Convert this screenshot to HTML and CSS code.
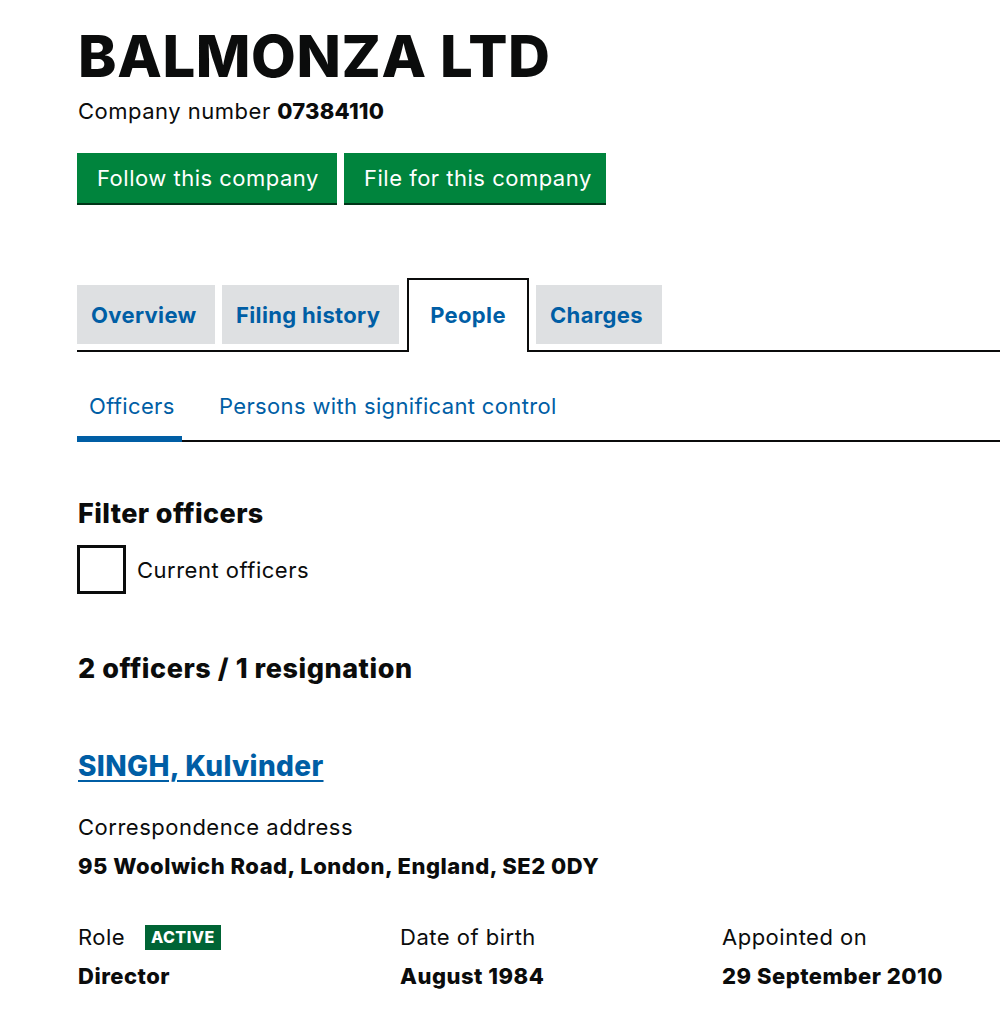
FILE: index.html
```html
<!DOCTYPE html>
<html lang="en">
<head>
<meta charset="utf-8">
<title>BALMONZA LTD - People</title>
<link rel="stylesheet" href="styles.css">
</head>
<body>
<main class="page">
  <h1 class="company-name">BALMONZA LTD</h1>
  <p class="company-number">Company number <strong>07384110</strong></p>
  <div class="actions">
    <a class="button" href="#">Follow this company</a>
    <a class="button" href="#">File for this company</a>
  </div>

  <ul class="tabs">
    <li class="tab"><a href="#">Overview</a></li>
    <li class="tab"><a href="#">Filing history</a></li>
    <li class="tab active"><a href="#">People</a></li>
    <li class="tab"><a href="#">Charges</a></li>
  </ul>

  <ul class="subtabs">
    <li class="subtab current"><a href="#">Officers</a></li>
    <li class="subtab"><a href="#">Persons with significant control</a></li>
  </ul>

  <h2 class="filter-heading">Filter officers</h2>
  <label class="check">
    <span class="box"></span>
    <span class="check-label">Current officers</span>
  </label>

  <h2 class="count-heading">2 officers / 1 resignation</h2>

  <section class="officer">
    <h2 class="officer-name"><a href="#">SINGH, Kulvinder</a></h2>
    <p class="label">Correspondence address</p>
    <p class="value">95 Woolwich Road, London, England, SE2 0DY</p>
    <div class="details">
      <div class="detail">
        <p class="label">Role <span class="status">ACTIVE</span></p>
        <p class="value">Director</p>
      </div>
      <div class="detail">
        <p class="label">Date of birth</p>
        <p class="value">August 1984</p>
      </div>
      <div class="detail">
        <p class="label">Appointed on</p>
        <p class="value">29 September 2010</p>
      </div>
    </div>
  </section>
</main>
</body>
</html>
```

FILE: styles.css
```css
html, body {
  margin: 0;
  padding: 0;
  background: #fff;
  overflow: hidden;
}
body {
  font-family: Inter, Lato, "Liberation Sans", Arial, sans-serif;
  color: #0b0c0c;
  width: 1000px;
  height: 1010px;
}
p, h1, h2, ul { margin: 0; padding: 0; }
ul { list-style: none; }
a { text-decoration: none; }

.page {
  margin-left: 77px;
  padding-top: 23px;
  width: 923px;
}

.company-name {
  font-size: 58px;
  font-weight: 800;
  line-height: 66px;
  letter-spacing: 0.6px;
  padding-left: 1px;
}
.company-number {
  font-size: 22px;
  line-height: 30px;
  margin-top: 7px;
  padding-left: 1px;
  letter-spacing: 0.5px;
}
.company-number strong { font-weight: 800; letter-spacing: 0.2px; }

.actions {
  display: flex;
  gap: 7px;
  margin-top: 27px;
}
.button {
  display: block;
  background: #00843d;
  color: #fff;
  font-size: 22px;
  line-height: 50px;
  height: 50px;
  padding: 0 0 0 20px;
  box-shadow: 0 2px 0 #003618;
  letter-spacing: 0.5px;
  box-sizing: border-box;
  white-space: nowrap;
}
.button:first-child { width: 260px; }
.button:last-child { width: 262px; }

.tabs {
  display: flex;
  align-items: flex-end;
  gap: 7px;
  margin-top: 75px;
  border-bottom: 2px solid #0b0c0c;
  height: 72px;
}
.tab {
  background: #dee0e2;
  height: 59px;
  margin-bottom: 6px;
  display: flex;
  align-items: center;
}
.tab a {
  color: #005ea5;
  font-weight: 700;
  font-size: 22px;
  padding: 0 14px;
  letter-spacing: 0.35px;
  white-space: nowrap;
}
.tab:nth-child(1) { width: 138px; }
.tab:nth-child(2) { width: 177px; }
.tab:nth-child(3) { margin-left: 1px; }
.tab:nth-child(4) { width: 126px; }
.tab.active {
  background: #fff;
  border: 2px solid #0b0c0c;
  border-bottom: 0;
  height: 74px;
  width: 122px;
  margin-bottom: -2px;
  padding-bottom: 2px;
  box-sizing: border-box;
  justify-content: center;
}
.tab.active a { padding: 0; }

.subtabs {
  display: flex;
  border-bottom: 2px solid #0b0c0c;
  margin-top: 28px;
  height: 60px;
}
.subtab {
  height: 60px;
  box-sizing: border-box;
  padding-top: 11px;
}
.subtab a {
  color: #005ea5;
  font-size: 22px;
  line-height: 30px;
  letter-spacing: 0.35px;
  white-space: nowrap;
}
.subtab.current {
  width: 105px;
  padding-left: 12px;
  border-bottom: 6px solid #005ea5;
  margin-bottom: -2px;
  height: 62px;
}
.subtab:nth-child(2) { padding-left: 37px; }

.filter-heading {
  font-size: 27px;
  font-weight: 800;
  line-height: 34px;
  margin-top: 55px;
  padding-left: 1px;
  letter-spacing: 0.4px;
}
.check {
  display: flex;
  align-items: center;
  gap: 11px;
  margin-top: 14px;
}
.box {
  width: 49px;
  height: 49px;
  box-sizing: border-box;
  border: 3px solid #0b0c0c;
  background: #fff;
}
.check-label {
  font-size: 22px;
  line-height: 30px;
  letter-spacing: 0.5px;
}

.count-heading {
  font-size: 27px;
  font-weight: 800;
  line-height: 34px;
  margin-top: 58px;
  padding-left: 1px;
  letter-spacing: 0.55px;
}

.officer { margin-top: 62px; }
.officer-name {
  font-size: 28px;
  font-weight: 800;
  line-height: 36px;
  padding-left: 1px;
  letter-spacing: 0.35px;
}
.officer-name a {
  color: #005ea5;
  text-decoration: underline;
  text-decoration-thickness: 2px;
  text-underline-offset: 4px;
}
.label {
  font-size: 22px;
  line-height: 30px;
  padding-left: 1px;
  letter-spacing: 0.5px;
}
.value {
  font-size: 22px;
  font-weight: 800;
  line-height: 30px;
  margin-top: 9px;
  padding-left: 1px;
  letter-spacing: 0.5px;
}
.officer-name + .label { margin-top: 28px; }

.details {
  display: grid;
  grid-template-columns: 322px 322px 322px;
  margin-top: 41px;
}
.status {
  display: inline-block;
  background: #006435;
  color: #fff;
  font-size: 16px;
  font-weight: 800;
  line-height: 25px;
  padding: 0 6px;
  margin-left: 13px;
  vertical-align: 2px;
  letter-spacing: 0.5px;
}
```
